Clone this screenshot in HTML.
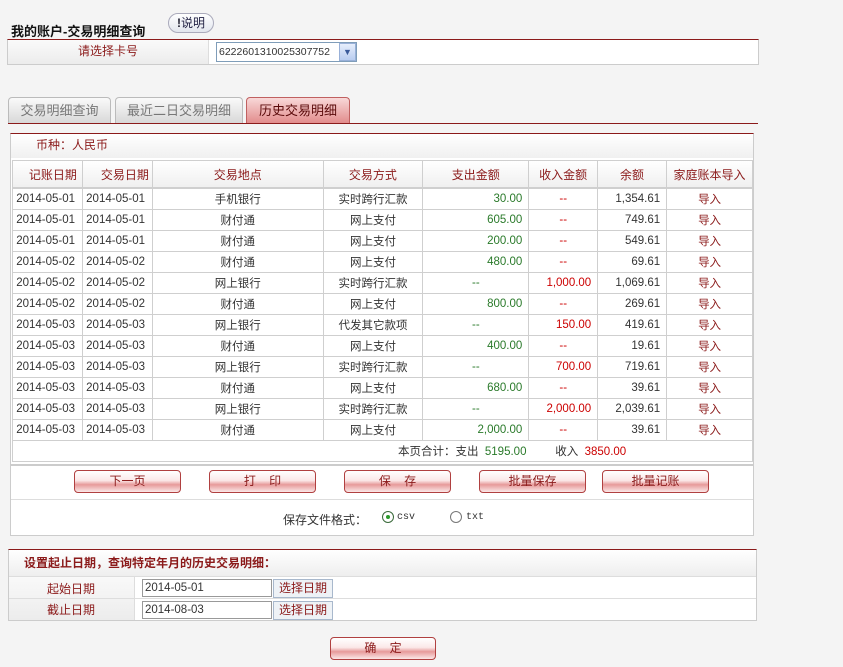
<!DOCTYPE html>
<html><head><meta charset="utf-8"><style>
*{margin:0;padding:0;box-sizing:border-box}
body{width:843px;height:667px;background:#f4f4f4;font-family:"Liberation Sans","Noto Sans CJK SC",sans-serif;font-size:12px;color:#333;position:relative;overflow:hidden}
.a{position:absolute}
.red{color:#8b1a1a}
.btn{position:absolute;height:23px;border:1px solid #b04040;border-radius:4px;background:linear-gradient(#fff 0%,#fbe8e8 45%,#e79a9a 65%,#fbe8e8 100%);color:#8b1a1a;text-align:center;line-height:20px;font-size:12px}
table{border-collapse:collapse;position:absolute}
td{border:1px solid #cfcfcf;height:21px;font-size:11.5px;white-space:nowrap}
.tab{position:absolute;top:97px;height:26px;border:1px solid #bbb;border-bottom:none;border-radius:4px 4px 0 0;background:linear-gradient(#fafafa,#d8d8d8);color:#777;font-size:13px;text-align:center;line-height:25px}
.g{color:#2a7a2a}
.r{color:#c00}
</style></head><body>
<div class="a" style="left:11px;top:21px;font-size:13px;font-weight:bold;color:#111">我的账户-交易明细查询</div>
<div class="a" style="left:168px;top:13px;width:46px;height:20px;border:1px solid #aab;border-radius:10px;background:linear-gradient(#fff,#e2e6ee);font-size:12px;line-height:18px;text-align:center;color:#224"><b style="color:#223">!</b>说明</div>
<div class="a" style="left:7px;top:39px;width:752px;height:26px;border:1px solid #ccc;border-top:1px solid #8b1a1a;background:#fff"></div>
<div class="a" style="left:8px;top:40px;width:201px;height:24px;background:linear-gradient(#fafafa,#ececec);border-right:1px solid #ddd;text-align:center;line-height:22px" ><span class="red">请选择卡号</span></div>
<div class="a" style="left:216px;top:42px;width:141px;height:20px;border:1px solid #7f9db9;background:#fff;font-size:10.5px;line-height:18px;padding-left:2px">6222601310025307752</div>
<div class="a" style="left:339px;top:43px;width:17px;height:18px;background:linear-gradient(#e6eefc,#b9cdf0);border:1px solid #98b0d8;color:#3a5a9a;font-size:9px;text-align:center;line-height:16px">▼</div>

<div class="tab" style="left:8px;width:103px">交易明细查询</div>
<div class="tab" style="left:115px;width:128px">最近二日交易明细</div>
<div class="tab" style="left:246px;width:104px;background:linear-gradient(#f8d8d8,#e28c8c);border-color:#c06060;color:#5a0a0a">历史交易明细</div>
<div class="a" style="left:8px;top:123px;width:750px;height:1px;background:#8b1a1a"></div>

<div class="a" style="left:10px;top:133px;width:744px;height:403px;border:1px solid #ccc;border-top:1px solid #8b1a1a;background:#fff"></div>
<div class="a" style="left:11px;top:134px;width:742px;height:24px;background:linear-gradient(#fff,#f0f0f0);padding-left:25px;line-height:22px"><span class="red">币种：人民币</span></div>

<table style="left:12px;top:160px;width:741px">
<colgroup><col style="width:70px"><col style="width:70px"><col style="width:171px"><col style="width:100px"><col style="width:106px"><col style="width:69px"><col style="width:69px"><col style="width:86px"></colgroup>
<tr style="background:linear-gradient(#fff,#efefef);color:#8b1a1a"><td style="height:27px;text-align:right;padding-right:5px;font-size:12px">记账日期</td><td style="text-align:right;padding-right:3px;font-size:12px">交易日期</td><td style="text-align:center;font-size:12px">交易地点</td><td style="text-align:center;font-size:12px">交易方式</td><td style="text-align:center;font-size:12px">支出金额</td><td style="text-align:center;font-size:12px">收入金额</td><td style="text-align:center;font-size:12px">余额</td><td style="text-align:center;font-size:12px">家庭账本导入</td></tr>
</table>
<table id="t" style="left:12px;top:188px;width:741px">
<colgroup><col style="width:70px"><col style="width:70px"><col style="width:171px"><col style="width:100px"><col style="width:106px"><col style="width:69px"><col style="width:69px"><col style="width:86px"></colgroup>
<tbody>
<tr><td>&nbsp;2014-05-01</td><td>&nbsp;2014-05-01</td><td align="center">手机银行</td><td align="center">实时跨行汇款</td><td align="right" class="g" style="padding-right:6px">30.00</td><td align="center" class="r">--</td><td align="right" style="padding-right:6px">1,354.61</td><td align="center" class="red">导入</td></tr>
<tr><td>&nbsp;2014-05-01</td><td>&nbsp;2014-05-01</td><td align="center">财付通</td><td align="center">网上支付</td><td align="right" class="g" style="padding-right:6px">605.00</td><td align="center" class="r">--</td><td align="right" style="padding-right:6px">749.61</td><td align="center" class="red">导入</td></tr>
<tr><td>&nbsp;2014-05-01</td><td>&nbsp;2014-05-01</td><td align="center">财付通</td><td align="center">网上支付</td><td align="right" class="g" style="padding-right:6px">200.00</td><td align="center" class="r">--</td><td align="right" style="padding-right:6px">549.61</td><td align="center" class="red">导入</td></tr>
<tr><td>&nbsp;2014-05-02</td><td>&nbsp;2014-05-02</td><td align="center">财付通</td><td align="center">网上支付</td><td align="right" class="g" style="padding-right:6px">480.00</td><td align="center" class="r">--</td><td align="right" style="padding-right:6px">69.61</td><td align="center" class="red">导入</td></tr>
<tr><td>&nbsp;2014-05-02</td><td>&nbsp;2014-05-02</td><td align="center">网上银行</td><td align="center">实时跨行汇款</td><td align="center" class="g">--</td><td align="right" class="r" style="padding-right:6px">1,000.00</td><td align="right" style="padding-right:6px">1,069.61</td><td align="center" class="red">导入</td></tr>
<tr><td>&nbsp;2014-05-02</td><td>&nbsp;2014-05-02</td><td align="center">财付通</td><td align="center">网上支付</td><td align="right" class="g" style="padding-right:6px">800.00</td><td align="center" class="r">--</td><td align="right" style="padding-right:6px">269.61</td><td align="center" class="red">导入</td></tr>
<tr><td>&nbsp;2014-05-03</td><td>&nbsp;2014-05-03</td><td align="center">网上银行</td><td align="center">代发其它款项</td><td align="center" class="g">--</td><td align="right" class="r" style="padding-right:6px">150.00</td><td align="right" style="padding-right:6px">419.61</td><td align="center" class="red">导入</td></tr>
<tr><td>&nbsp;2014-05-03</td><td>&nbsp;2014-05-03</td><td align="center">财付通</td><td align="center">网上支付</td><td align="right" class="g" style="padding-right:6px">400.00</td><td align="center" class="r">--</td><td align="right" style="padding-right:6px">19.61</td><td align="center" class="red">导入</td></tr>
<tr><td>&nbsp;2014-05-03</td><td>&nbsp;2014-05-03</td><td align="center">网上银行</td><td align="center">实时跨行汇款</td><td align="center" class="g">--</td><td align="right" class="r" style="padding-right:6px">700.00</td><td align="right" style="padding-right:6px">719.61</td><td align="center" class="red">导入</td></tr>
<tr><td>&nbsp;2014-05-03</td><td>&nbsp;2014-05-03</td><td align="center">财付通</td><td align="center">网上支付</td><td align="right" class="g" style="padding-right:6px">680.00</td><td align="center" class="r">--</td><td align="right" style="padding-right:6px">39.61</td><td align="center" class="red">导入</td></tr>
<tr><td>&nbsp;2014-05-03</td><td>&nbsp;2014-05-03</td><td align="center">网上银行</td><td align="center">实时跨行汇款</td><td align="center" class="g">--</td><td align="right" class="r" style="padding-right:6px">2,000.00</td><td align="right" style="padding-right:6px">2,039.61</td><td align="center" class="red">导入</td></tr>
<tr><td>&nbsp;2014-05-03</td><td>&nbsp;2014-05-03</td><td align="center">财付通</td><td align="center">网上支付</td><td align="right" class="g" style="padding-right:6px">2,000.00</td><td align="center" class="r">--</td><td align="right" style="padding-right:6px">39.61</td><td align="center" class="red">导入</td></tr>
<tr><td colspan="8" style="padding-left:385px">本页合计：支出 &nbsp;<span class="g">5195.00</span>&nbsp;&nbsp;&nbsp;&nbsp;&nbsp;&nbsp;&nbsp;&nbsp;&nbsp;收入 &nbsp;<span class="r">3850.00</span></td></tr>
</tbody></table>
<div class="a" style="left:11px;top:464px;width:742px;height:2px;background:#ccc"></div>
<div class="btn" style="left:74px;top:470px;width:107px">下一页</div>
<div class="btn" style="left:209px;top:470px;width:107px">打&nbsp;&nbsp;&nbsp;&nbsp;印</div>
<div class="btn" style="left:344px;top:470px;width:107px">保&nbsp;&nbsp;&nbsp;&nbsp;存</div>
<div class="btn" style="left:479px;top:470px;width:107px">批量保存</div>
<div class="btn" style="left:602px;top:470px;width:107px">批量记账</div>
<div class="a" style="left:11px;top:499px;width:742px;height:1px;background:#ddd"></div>
<div class="a" style="left:283px;top:511px">保存文件格式：</div>
<div class="a" style="left:382px;top:511px;width:12px;height:12px;border:1px solid #3a6a3a;border-radius:50%;background:#fff"><div style="margin:3px;width:4px;height:4px;border-radius:50%;background:#2a9a2a"></div></div>
<div class="a" style="left:397px;top:512px;font-family:'Liberation Mono',monospace;font-size:10px">csv</div>
<div class="a" style="left:450px;top:511px;width:12px;height:12px;border:1px solid #777;border-radius:50%;background:#fff"></div>
<div class="a" style="left:466px;top:512px;font-family:'Liberation Mono',monospace;font-size:10px">txt</div>

<div class="a" style="left:8px;top:549px;width:749px;height:72px;border:1px solid #ccc;border-top:1px solid #8b1a1a;background:#fff"></div>
<div class="a" style="left:9px;top:550px;width:747px;height:27px;background:linear-gradient(#fff,#eee);border-bottom:1px solid #ddd;padding-left:15px;line-height:26px;font-weight:bold;color:#8b1a1a;font-size:12px">设置起止日期，查询特定年月的历史交易明细：</div>
<div class="a" style="left:9px;top:577px;width:126px;height:43px;background:linear-gradient(#f9f9f9,#ececec);border-right:1px solid #ddd"></div>
<div class="a" style="left:9px;top:598px;width:747px;height:1px;background:#ddd"></div>
<div class="a red" style="left:47px;top:580px">起始日期</div>
<div class="a red" style="left:47px;top:601px">截止日期</div>
<div class="a" style="left:142px;top:579px;width:130px;height:18px;border:1px solid #999;background:#fff;font-size:11.5px;padding-left:2px;line-height:16px">2014-05-01</div>
<div class="a" style="left:142px;top:601px;width:130px;height:18px;border:1px solid #999;background:#fff;font-size:11.5px;padding-left:2px;line-height:16px">2014-08-03</div>
<div class="a red" style="left:273px;top:579px;width:60px;height:19px;border:1px solid #a8b8cc;background:#eef2f6;text-align:center;line-height:17px">选择日期</div>
<div class="a red" style="left:273px;top:601px;width:60px;height:19px;border:1px solid #a8b8cc;background:#eef2f6;text-align:center;line-height:17px">选择日期</div>
<div class="btn" style="left:330px;top:637px;width:106px">确&nbsp;&nbsp;&nbsp;&nbsp;定</div>
</body></html>
